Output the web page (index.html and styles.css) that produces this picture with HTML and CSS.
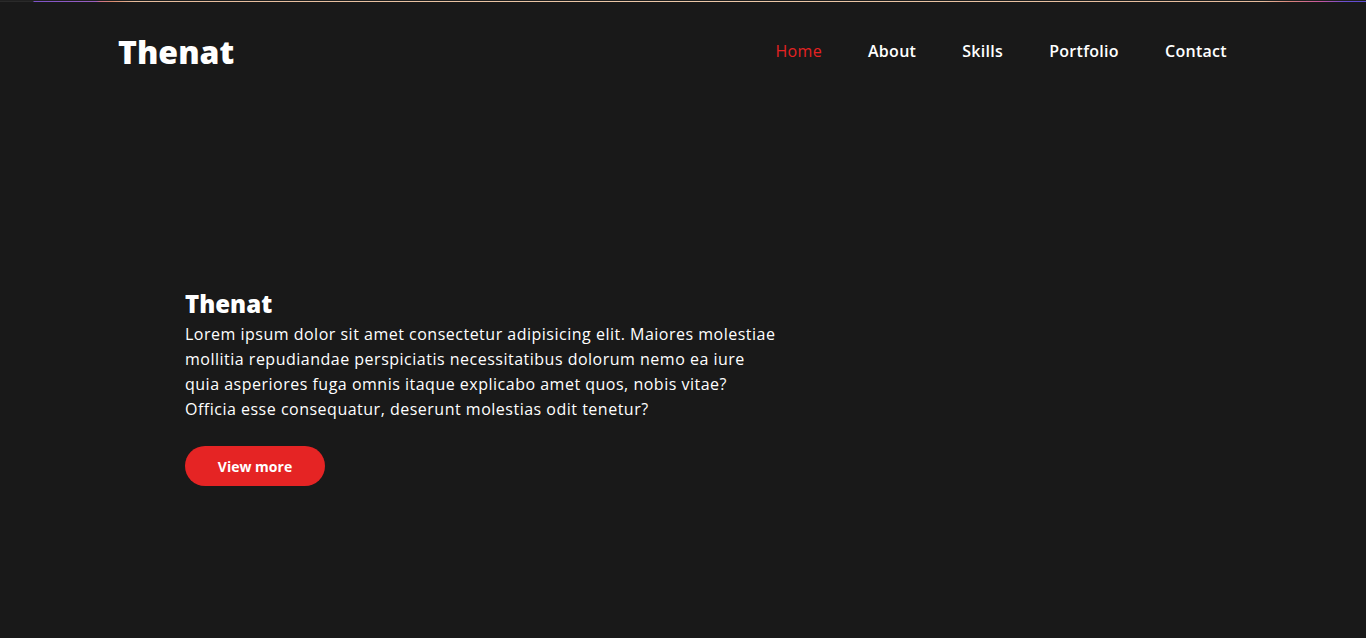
FILE: index.html
```html
<!DOCTYPE html>
<html lang="en">
<head>
<meta charset="utf-8">
<title>Thenat</title>
<link rel="stylesheet" href="styles.css">
</head>
<body>
<div class="topline"></div>
<header class="header">
  <a class="logo" href="#">Thenat</a>
  <nav class="nav">
    <a class="nav-link active" href="#">Home</a>
    <a class="nav-link" href="#">About</a>
    <a class="nav-link" href="#">Skills</a>
    <a class="nav-link" href="#">Portfolio</a>
    <a class="nav-link" href="#">Contact</a>
  </nav>
</header>
<main class="hero">
  <div class="hero-content">
    <h1 class="hero-title">Thenat</h1>
    <p class="hero-text">Lorem ipsum dolor sit amet consectetur adipisicing elit. Maiores molestiae mollitia repudiandae perspiciatis necessitatibus dolorum nemo ea iure quia asperiores fuga omnis itaque explicabo amet quos, nobis vitae? Officia esse consequatur, deserunt molestias odit tenetur?</p>
    <a class="btn" href="#">View more</a>
  </div>
</main>
</body>
</html>
```
FILE: styles.css
```css
* { box-sizing: border-box; }
html, body { margin: 0; padding: 0; }
body {
  background: #191919;
  color: #ffffff;
  font-family: "Open Sans", "Noto Sans", sans-serif;
  height: 638px;
  overflow: hidden;
}
a { text-decoration: none; color: inherit; }
.topline {
  height: 2px;
  border-top: 1px solid #202020;
  background: linear-gradient(90deg, #2a2a2a 0, #2a2a2a 33px, #7d52c8 34px, #9a5fc0 96px, #d0708a 100px, #d98a6e 112px, #e6bc9c 135px, #ecc8a8 50%, #e6bc9c 1262px, #d9857a 1290px, #c8569e 1320px, #6a4fd0 1345px, #5a48d0 1366px);
}
.header {
  display: flex;
  align-items: center;
  justify-content: space-between;
  padding: 0 139px 0 118px;
  height: 98px;
}
.logo {
  font-size: 32px;
  font-weight: 800;
  color: #fff;
}
.nav { display: flex; gap: 46px; }
.nav-link {
  font-size: 16px;
  font-weight: 600;
  letter-spacing: 0.3px;
  color: #fff;
}
.nav-link.active { color: #e52222; font-weight: 500; }
.hero {
  padding: 186px 0 0 185px;
}
.hero-content { width: 594px; }
.hero-title {
  margin: 0;
  font-size: 24px;
  font-weight: 800;
  line-height: 36px;
}
.hero-text {
  margin: 0 0 24px;
  font-size: 16px;
  line-height: 25px;
  font-weight: 500;
  letter-spacing: 0.5px;
}
.btn {
  display: inline-flex;
  align-items: center;
  justify-content: center;
  width: 140px;
  height: 40px;
  border-radius: 20px;
  background: #e52424;
  color: #fff;
  font-size: 14px;
  font-weight: 700;
}
```
